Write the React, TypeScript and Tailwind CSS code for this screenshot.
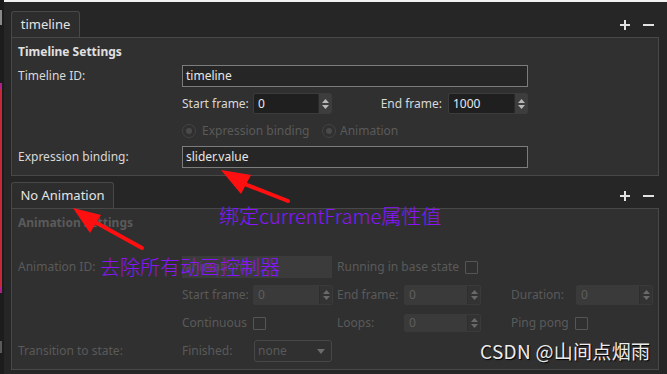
import React from 'react';

const labelCls = 'text-[#d8d8d8]';
const dimCls = 'text-[#5a5a5a]';

function PlusMinus() {
  return (
    <div className="flex items-center gap-[13px] pr-[5px] pb-[7px]">
      <svg width="10" height="10" viewBox="0 0 10 10">
        <rect x="4" y="0" width="2" height="10" fill="#e2e2e2" />
        <rect x="0" y="4" width="10" height="2" fill="#e2e2e2" />
      </svg>
      <svg width="11" height="10" viewBox="0 0 11 10">
        <rect x="0" y="4" width="11" height="2" fill="#e2e2e2" />
      </svg>
    </div>
  );
}

function Tab({ label, width }: { label: string; width: string }) {
  return (
    <div className="flex items-end h-[26px]">
      <div
        className={`${width} h-[26px] border border-b-0 border-[#484848] bg-[#2d2d2d] rounded-t-[3px] flex items-center justify-center text-[#e4e4e4] text-[13px]`}
      >
        {label}
      </div>
      <div className="flex-1" />
      <PlusMinus />
    </div>
  );
}

function SpinBox({ value, width, disabled }: { value: string; width: string; disabled?: boolean }) {
  return (
    <div
      className={`${width} shrink-0 h-full flex rounded-[2px] border ${
        disabled ? 'border-[#3a3a3a] bg-[#3a3a3a]' : 'border-[#3c3c3c] bg-[#1f1f1f]'
      }`}
    >
      <div className={`flex-1 flex items-center pl-[4px] ${disabled ? 'text-[#5e5e5e]' : 'text-[#e4eaf2]'}`}>{value}</div>
      <div
        className={`w-[13px] flex flex-col items-center justify-center gap-[2px] border-l ${
          disabled ? 'border-[#2e2e2e] bg-[#333333]' : 'border-[#2a2a2a] bg-[#3d3d3d]'
        }`}
      >
        <svg width="7" height="4" viewBox="0 0 7 4">
          <path d="M0 4 L3.5 0 L7 4 Z" fill={disabled ? '#6a6a6a' : '#b8b8b8'} />
        </svg>
        <svg width="7" height="4" viewBox="0 0 7 4">
          <path d="M0 0 L3.5 4 L7 0 Z" fill={disabled ? '#6a6a6a' : '#b8b8b8'} />
        </svg>
      </div>
    </div>
  );
}

function CheckBox() {
  return <div className="w-[13px] h-[13px] border border-[#555555] rounded-[1px]" />;
}

function Radio() {
  return (
    <div className="w-[14px] h-[14px] rounded-full border border-[#444444] flex items-center justify-center">
      <div className="w-[6px] h-[6px] rounded-full bg-[#4a4a4a]" />
    </div>
  );
}

function TimelineSection() {
  return (
    <div>
      <Tab label="timeline" width="w-[69px]" />
      <div className="h-[139px] border border-[#484848] bg-[#303030] pl-[6px] pt-[6px]">
        <div className="h-[16px] leading-[16px] font-bold text-[#e0e0e0]">Timeline Settings</div>
        <div className="mt-[5px] h-[22px] flex items-center">
          <div className={`w-[164px] ${labelCls}`}>Timeline ID:</div>
          <div className="w-[346px] h-full border border-[#7c7c7c] bg-[#262626] flex items-center pl-[3px] text-[#e6e6e6]">
            timeline
          </div>
        </div>
        <div className="mt-[6px] h-[21px] flex items-center">
          <div className="w-[164px]" />
          <div className="w-[346px] h-full flex items-center">
            <div className={`w-[71px] ${labelCls}`}>Start frame:</div>
            <SpinBox value="0" width="w-[79px]" />
            <div className={`flex-1 text-right pr-[6px] ${labelCls}`}>End frame:</div>
            <SpinBox value="1000" width="w-[80px]" />
          </div>
        </div>
        <div className="mt-[7px] h-[20px] flex items-center">
          <div className="w-[164px]" />
          <Radio />
          <div className={`ml-[6px] w-[120px] ${dimCls}`}>Expression binding</div>
          <Radio />
          <div className={`ml-[4px] ${dimCls}`}>Animation</div>
        </div>
        <div className="mt-[5px] h-[22px] flex items-center">
          <div className={`w-[164px] ${labelCls}`}>Expression binding:</div>
          <div className="w-[346px] h-full border border-[#7c7c7c] bg-[#262626] flex items-center pl-[3px] text-[#e6e6e6]">
            slider.value
          </div>
        </div>
      </div>
    </div>
  );
}

function AnimationSection() {
  return (
    <div className="mt-[6px]">
      <Tab label="No Animation" width="w-[103px]" />
      <div className={`h-[162px] border border-[#484848] bg-[#303030] pl-[6px] pt-[6px] ${dimCls}`}>
        <div className="h-[16px] leading-[16px] font-bold">Animation Settings</div>
        <div className="mt-[25px] h-[22px] flex items-center">
          <div className="w-[164px]">Animation ID:</div>
          <div className="w-[150px] h-full bg-[#3b3b3b] flex items-center pl-[3px] text-[#4f4f4f]">animation02</div>
          <div className="ml-[5px] w-[128px]">Running in base state</div>
          <CheckBox />
        </div>
        <div className="mt-[7px] h-[20px] flex items-center">
          <div className="w-[164px]" />
          <div className="w-[71px]">Start frame:</div>
          <SpinBox value="0" width="w-[80px]" disabled />
          <div className="ml-[4px] w-[67px]">End frame:</div>
          <SpinBox value="0" width="w-[77px]" disabled />
          <div className="ml-[30px] w-[65px]">Duration:</div>
          <SpinBox value="0" width="w-[77px]" disabled />
        </div>
        <div className="mt-[9px] h-[18px] flex items-center">
          <div className="w-[164px]" />
          <div className="w-[71px]">Continuous</div>
          <div className="w-[84px]">
            <CheckBox />
          </div>
          <div className="w-[67px]">Loops:</div>
          <SpinBox value="0" width="w-[77px]" disabled />
          <div className="ml-[30px] w-[64px]">Ping pong</div>
          <CheckBox />
        </div>
        <div className="mt-[8px] h-[22px] flex items-center">
          <div className="w-[164px]">Transition to state:</div>
          <div className="w-[72px]">Finished:</div>
          <div className="w-[78px] h-full border border-[#474747] rounded-[3px] flex items-center justify-between pl-[3px] pr-[6px]">
            <span>none</span>
            <svg width="8" height="5" viewBox="0 0 8 5">
              <path d="M0 0 L4 5 L8 0 Z" fill="#6c6c6c" />
            </svg>
          </div>
        </div>
      </div>
    </div>
  );
}

function LeftStrip() {
  return (
    <div className="w-[4px] flex flex-col bg-[#1c1c1c]">
      <div className="h-[10px]" />
      <div className="h-[15px] w-[2px] bg-[#8a8a8a]" />
      <div className="h-[58px]" />
      <div className="h-[6px] w-[2px] bg-[#b0208a]" />
      <div className="h-[198px] w-[2px] bg-[#c8283a]" />
      <div className="h-[6px] w-[2px] bg-[#b0208a]" />
      <div className="h-[48px]" />
      <div className="h-[12px] w-[2px] bg-[#5a5a5a]" />
    </div>
  );
}

export default function App() {
  return (
    <div
      className="w-[667px] h-[374px] bg-[#262626] flex overflow-hidden relative text-[12px]"
      style={{ fontFamily: '"Noto Sans", "Noto Sans CJK SC", sans-serif' }}
    >
      <LeftStrip />
      <div className="flex-1 flex flex-col">
        <div className="h-[2px] bg-[#f2f2f2]" />
        <div className="pl-[7px] pr-[8px] pt-[9px]">
          <TimelineSection />
          <AnimationSection />
        </div>
      </div>

      {/* annotations drawn over the screenshot */}
      <svg className="absolute left-0 top-0 pointer-events-none" width="667" height="374">
        <line x1="288" y1="201" x2="242" y2="183" stroke="#ff1010" strokeWidth="4" strokeLinecap="round" />
        <path d="M221 170 L251 175 L241 194 Z" fill="#ff1010" />
        <line x1="142" y1="248" x2="95" y2="222" stroke="#ff1010" strokeWidth="4" strokeLinecap="round" />
        <path d="M73 208 L101 215 L90 233 Z" fill="#ff1010" />
      </svg>
      <div
        className="absolute left-[219px] top-[203px] text-[20px] leading-[26px] font-light text-[#8a14ff] whitespace-nowrap"
        style={{ fontFamily: '"Noto Sans CJK SC", sans-serif' }}
      >
        绑定currentFrame属性值
      </div>
      <div
        className="absolute left-[100px] top-[254px] text-[20px] leading-[26px] font-light text-[#8a14ff] whitespace-nowrap"
        style={{ fontFamily: '"Noto Sans CJK SC", sans-serif' }}
      >
        去除所有动画控制器
      </div>
      <div
        className="absolute left-[480px] top-[338px] text-[19px] leading-[26px] tracking-[0.3px] text-[#ececec] whitespace-nowrap [text-shadow:1px_1px_1px_#000]"
        style={{ fontFamily: '"Noto Sans CJK SC", sans-serif' }}
      >
        CSDN @山间点烟雨
      </div>
    </div>
  );
}
